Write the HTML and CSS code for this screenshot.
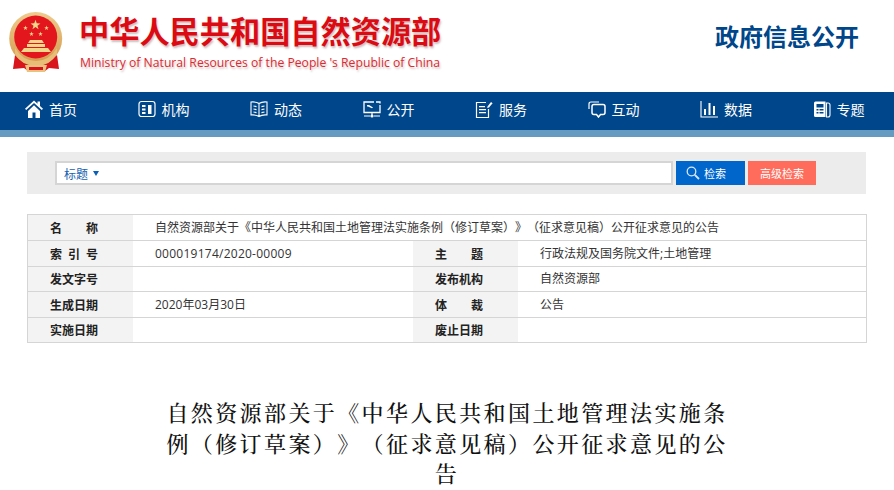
FILE: index.html
```html
<!DOCTYPE html>
<html lang="zh-CN">
<head>
<meta charset="utf-8">
<title>政府信息公开</title>
<link rel="stylesheet" href="styles.css">
</head>
<body>
<header class="header">
  <svg class="emblem" viewBox="0 0 56 60" aria-hidden="true">
    <defs>
      <polygon id="st" points="0,-1 .235,-.324 .951,-.309 .38,.124 .588,.809 0,.4 -.588,.809 -.38,.124 -.951,-.309 -.235,-.324"/>
      <linearGradient id="gd" x1="0" y1="0" x2="0" y2="1"><stop offset="0" stop-color="#eecb8e"/><stop offset="1" stop-color="#d49a4c"/></linearGradient>
    </defs>
    <path d="M7 43l-2 14 11-1 4 3h17l4-3 10 1-2-14-10 8H17z" fill="#d8141c"/>
    <circle cx="27.700" cy="26.500" r="26.500" fill="url(#gd)"/>
    <circle cx="27.700" cy="25" r="21.500" fill="#e3161d"/>
    <g fill="#f2d68a">
      <use href="#st" transform="translate(27.500 13) scale(5.200)"/>
      <use href="#st" transform="translate(17.500 16) scale(2.400)"/>
      <use href="#st" transform="translate(23.500 22) scale(2.400)"/>
      <use href="#st" transform="translate(32.500 22) scale(2.400)"/>
      <use href="#st" transform="translate(38.500 16) scale(2.400)"/>
      <path d="M22 28h12l2 3h-16zM19 32h18v3H19zM16 36h24l3 4H13z"/>
    </g>
    <path d="M7 36q8 13 21 13t21-13v6q-7 12-21 12T7 42z" fill="#e7bd78"/>
    <path d="M17 53h22l-2 7H19z" fill="#e9c27f"/>
    <path d="M21 55h14v3H21z" fill="#d8141c"/>
  </svg>
  <div class="brand">
    <div class="brand-cn">中华人民共和国自然资源部</div>
    <div class="brand-en">Ministry of Natural Resources of the People 's Republic of China</div>
  </div>
  <div class="section-name">政府信息公开</div>
</header>

<nav class="nav">
  <a class="nav-item"><svg class="ico" viewBox="0 0 18 18"><path d="M9 .5 0 8.800l1.200 1.300L9 3l7.800 7.100 1.200-1.300-3-2.800V1.500h-2.500v2.200zM3 11V18h4.500v-5.500h3V18H15v-7L9 5.200z" fill="#fff"/></svg>首页</a>
  <a class="nav-item"><svg class="ico" viewBox="0 0 18 18"><rect x="1" y="1.500" width="16" height="15" rx="2.500" fill="none" stroke="#fff" stroke-width="1.200"/><path d="M4 5h3.500v2H4zM4 8.500h3.500v2H4zM4 12h3.500v2H4zM10 5h3.500v9H10z" fill="#fff"/></svg>机构</a>
  <a class="nav-item"><svg class="ico" viewBox="0 0 18 18"><path d="M9 3.500C7 2.200 4 1.700 1 2v13c3-.3 6 .2 8 1.500 2-1.300 5-1.800 8-1.500V2c-3-.3-6 .2-8 1.500zM9 3.500v13" fill="none" stroke="#fff" stroke-width="1.100"/><path d="M3.500 6l3 .6M3.500 9l3 .6M3.500 12l3 .6M14.500 6l-3 .6M14.500 9l-3 .6M14.500 12l-3 .6" stroke="#fff" stroke-width="1.100"/></svg>动态</a>
  <a class="nav-item"><svg class="ico" viewBox="0 0 18 18"><path d="M11 2H1v10.500h16V5M13 2h4v1.500" fill="none" stroke="#fff" stroke-width="1.300"/><path d="M4 5h2l4 2.500-1 .7L5 6.500H4z" fill="#fff"/><path d="M9 12.500v2.500M1 16h6M11 16h6" stroke="#fff" stroke-width="1.200"/><circle cx="9" cy="16" r="1.600" fill="#fff"/></svg>公开</a>
  <a class="nav-item"><svg class="ico" viewBox="0 0 18 18"><path d="M11 2.500H1.500V17.500h12V9" fill="none" stroke="#fff" stroke-width="1.200"/><path d="M4 6h6v1.300H4zM4 9h7v1.300H4zM4 12h7v1.300H4z" fill="#fff"/><path d="m12.500 6.500 3.500-4.500 1.600 1.300-3.600 4.300-1.800.5z" fill="#fff"/></svg>服务</a>
  <a class="nav-item"><svg class="ico" viewBox="0 0 18 18"><path d="M1 9V4q0-2 2-2h8" fill="none" stroke="#fff" stroke-width="1.200"/><path d="M6 4.500h9q2 0 2 2v6q0 2-2 2h-2.500L10.500 17l-2-2.500H6q-2 0-2-2v-6q0-2 2-2z" fill="none" stroke="#fff" stroke-width="1.500"/></svg>互动</a>
  <a class="nav-item"><svg class="ico" viewBox="0 0 18 18"><path d="M1 1v16h17" fill="none" stroke="#fff" stroke-width="1.100"/><path d="M4 9h2v6H4zM8.500 3h2v12h-2zM13 6h2v9h-2z" fill="#fff"/></svg>数据</a>
  <a class="nav-item"><svg class="ico" viewBox="0 0 18 18"><path d="M1 3q0-1.500 1.500-1.500h10V17H2.500Q1 17 1 15.500z" fill="#fff"/><path d="M13.500 3H15q2 0 2 2v10q0 2-2 2h-1.500z" fill="none" stroke="#fff" stroke-width="1.100"/><path d="M3.500 4h7v3.500h-7zM3.500 9h2v1.500h-2zM6.500 9h4v1.500h-4zM3.500 12h2v1.500h-2zM6.500 12h4v1.500h-4z" fill="#00468a"/></svg>专题</a>
</nav>

<section class="search">
  <div class="search-input"><span class="search-field">标题</span><i class="caret"></i></div>
  <button class="btn btn-search"><svg class="mag" viewBox="0 0 14 14"><circle cx="5.500" cy="5.500" r="4.300" fill="none" stroke="#d8e8f8" stroke-width="1.300"/><path d="m8.800 8.800 4.200 4.200" stroke="#d8e8f8" stroke-width="1.800"/></svg>检索</button>
  <button class="btn btn-adv">高级检索</button>
</section>

<table class="meta">
  <colgroup><col class="c-label"><col class="c-value"><col class="c-label"><col></colgroup>
  <tr><th>名　　称</th><td colspan="3">自然资源部关于《中华人民共和国土地管理法实施条例（修订草案）》（征求意见稿）公开征求意见的公告</td></tr>
  <tr><th>索&ensp;引&ensp;号</th><td class="doc-no">000019174/2020-00009</td><th>主　　题</th><td>行政法规及国务院文件;土地管理</td></tr>
  <tr><th>发文字号</th><td></td><th>发布机构</th><td>自然资源部</td></tr>
  <tr><th>生成日期</th><td>2020年03月30日</td><th>体　　裁</th><td>公告</td></tr>
  <tr><th>实施日期</th><td></td><th>废止日期</th><td></td></tr>
</table>

<h1 class="title">自然资源部关于《中华人民共和国土地管理法实施条例（修订草案）》（征求意见稿）公开征求意见的公告</h1>
</body>
</html>
```

FILE: styles.css
```css
* { box-sizing: border-box; }
html, body { margin: 0; padding: 0; }
body {
  width: 894px;
  height: 490px;
  overflow: hidden;
  background: #fff;
  font-family: "Noto Sans CJK SC", "Liberation Sans", sans-serif;
  font-size: 12px;
  color: #333;
  text-spacing-trim: space-all;
  font-feature-settings: "palt" 0;
}

.header {
  height: 92px;
  display: flex;
  padding: 12px 35px 0 8px;
}
.emblem { width: 56px; height: 60px; flex: none; filter: blur(.35px); }
.brand { margin-left: 16px; flex: 1; }
.brand-cn {
  font-size: 30.200px;
  font-weight: 700;
  line-height: 40px;
  margin-top: -2px;
  margin-left: -1px;
  color: #dc0a12;
  text-shadow: 1px 2px 2px rgba(120, 60, 60, .35);
}
.brand-en {
  font-family: "Open Sans", sans-serif;
  font-size: 12.200px;
  line-height: 18px;
  margin-top: 4px;
  color: #dc2a30;
  text-shadow: 1px 2px 2px rgba(120, 60, 60, .3);
}
.section-name {
  font-size: 24px;
  font-weight: 700;
  line-height: 34px;
  margin-top: 7px;
  color: #00468a;
}

.nav {
  height: 45px;
  display: grid;
  grid-template-columns: repeat(7, 112.500px) auto;
  padding: 0 0 0 25px;
  background: #00468a;
  border-bottom: 7px solid #659ac1;
  background-clip: padding-box;
}
.nav-item {
  display: flex;
  align-items: center;
  gap: 6px;
  padding-bottom: 4px;
  font-size: 14px;
  color: #fff;
}
.ico { width: 18px; height: 18px; flex: none; }

.search {
  margin: 15px 28px 0 27px;
  height: 42px;
  padding: 9px 50px 0 28px;
  display: flex;
  align-items: flex-start;
  background: #ececec;
}
.search-input {
  flex: 1;
  height: 24px;
  display: flex;
  align-items: center;
  padding-left: 7px;
  background: #fff;
  border: 2px solid #d5d5d5;
}
.search-field { color: #1560b0; font-size: 12px; }
.caret {
  width: 0;
  height: 0;
  margin: 0 0 0 5px;
  border: 3px solid transparent;
  border-top: 5px solid #0b5fb5;
  border-bottom: 0;
}
.btn {
  height: 24px;
  border: 0;
  padding: 0;
  font: inherit;
  font-size: 11px;
  color: #fff;
  display: flex;
  align-items: center;
  justify-content: center;
}
.btn-search { width: 69px; margin-left: 3px; padding-right: 9px; background: #0066cc; gap: 4px; }
.mag { width: 14px; height: 14px; }
.btn-adv { width: 68px; margin-left: 3px; background: #ff6c5c; }

.meta {
  width: 840px;
  margin: 20px 0 0 27px;
  table-layout: fixed;
  border-collapse: separate;
  border-spacing: 0;
  border-top: 1px solid #d5d5d5;
  border-left: 1px solid #d5d5d5;
  border-right: 1px solid #d5d5d5;
}
.c-label { width: 105px; }
.c-value { width: 280px; }
.meta tr { height: 26px; }
.meta tr:nth-child(3), .meta tr:nth-child(5) { height: 25px; }
.meta th, .meta td {
  padding: 0 0 0 22px;
  border-bottom: 1px solid #d5d5d5;
  font-size: 12px;
  line-height: 16px;
  text-align: left;
  white-space: nowrap;
}
.meta th { background: #f3f3f3; font-weight: 700; color: #222; }
.meta td { font-family: "Open Sans", "Noto Sans CJK SC", sans-serif; font-weight: 400; color: #333; }
.meta .doc-no { letter-spacing: .25px; }

.title {
  width: 572px;
  margin: 54px auto 0;
  font-family: "Noto Serif CJK SC", "Liberation Serif", "Noto Sans CJK SC", serif;
  font-size: 22px;
  font-weight: 500;
  line-height: 30.500px;
  letter-spacing: 2.400px;
  text-align: center;
  color: #111;
}
```
